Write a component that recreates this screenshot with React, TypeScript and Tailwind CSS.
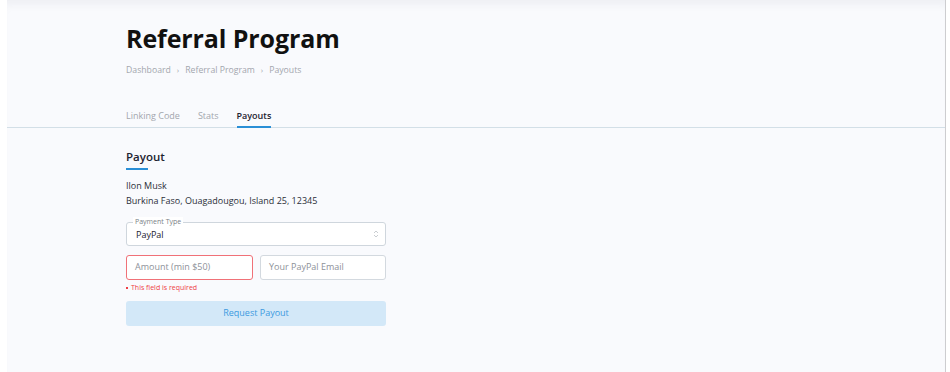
import React from "react";

export default function App() {
  return (
    <div className="flex h-[372px] w-[950px] overflow-hidden bg-white" style={{ fontFamily: '"Open Sans", "Liberation Sans", sans-serif' }}>
      <div className="w-[7px] shrink-0 bg-white" />
      <div className="flex w-[938px] shrink-0 flex-col bg-[#f9fafd] shadow-[inset_0_10px_12px_-8px_rgba(30,30,60,0.07)]">
        <div className="pl-[119px] pt-[20px]">
          <h1 className="text-[25px] font-bold leading-[36px] tracking-[-0.1px] text-[#111]">Referral Program</h1>
          <div className="mt-[8px] flex items-center gap-[6px] text-[8.7px] leading-[12px] text-[#a3a6ad]">
            <span>Dashboard</span>
            <span className="text-[8px]">›</span>
            <span>Referral Program</span>
            <span className="text-[8px]">›</span>
            <span>Payouts</span>
          </div>
        </div>
        <div className="mt-[33px] flex gap-[18px] border-b border-[#d3dfe7] pl-[119px] text-[9px]">
          <div className="pb-[4px] text-[#a3a6ad]">Linking Code</div>
          <div className="pb-[4px] text-[#a3a6ad]">Stats</div>
          <div className="-mb-px border-b-2 border-[#2a8fd6] pb-[3px] font-semibold text-[#1d2330]">Payouts</div>
        </div>
        <div className="pl-[119px] pt-[20px]">
          <div className="text-[11.5px] font-semibold leading-[18px] text-[#1d2330]">Payout</div>
          <div className="mt-[2px] h-[2px] w-[22px] bg-[#2a8fd6]" />
          <div className="mt-[8px] text-[9px] leading-[15px] text-[#2b2f38]">
            <div>Ilon Musk</div>
            <div>Burkina Faso, Ouagadougou, Island 25, 12345</div>
          </div>
          <div className="relative mt-[14px] flex h-[24px] w-[260px] items-center justify-between rounded-[3px] border border-[#cfd6dd] bg-white pl-[9px] pr-[6px]">
            <span className="absolute -top-[6px] left-[6px] bg-white px-[2px] text-[7px] leading-[10px] text-[#7a7f87]">Payment Type</span>
            <span className="pt-[3px] text-[9px] text-[#1d2330]">PayPal</span>
            <svg width="6" height="10" viewBox="0 0 6 10" className="text-[#c3c7cc]">
              <path d="M1 4 L3 2 L5 4" fill="none" stroke="currentColor" strokeWidth="0.9" />
              <path d="M1 6 L3 8 L5 6" fill="none" stroke="currentColor" strokeWidth="0.9" />
            </svg>
          </div>
          <div className="mt-[9px] flex w-[260px] gap-[7px]">
            <div className="flex h-[25px] w-[127px] items-center rounded-[3px] border border-[#f07178] bg-white pl-[8px] text-[9px] text-[#8d9199]">Amount (min $50)</div>
            <div className="flex h-[25px] w-[126px] items-center rounded-[3px] border border-[#d3d9df] bg-white pl-[8px] text-[9px] text-[#8d9199]">Your PayPal Email</div>
          </div>
          <div className="mt-[3px] flex items-center gap-[3px] text-[7px] leading-[10px] text-[#ee3e45]">
            <span className="h-[2px] w-[2px] bg-[#ee3e45]" />
            <span>This field is required</span>
          </div>
          <div className="mt-[8px] flex h-[25px] w-[260px] items-center justify-center rounded-[3px] bg-[#d3e8f8] text-[9px] text-[#3c9ae0]">Request Payout</div>
        </div>
      </div>
      <div className="w-px shrink-0 bg-[#cdcdd0]" />
      <div className="flex-1 bg-white" />
    </div>
  );
}
